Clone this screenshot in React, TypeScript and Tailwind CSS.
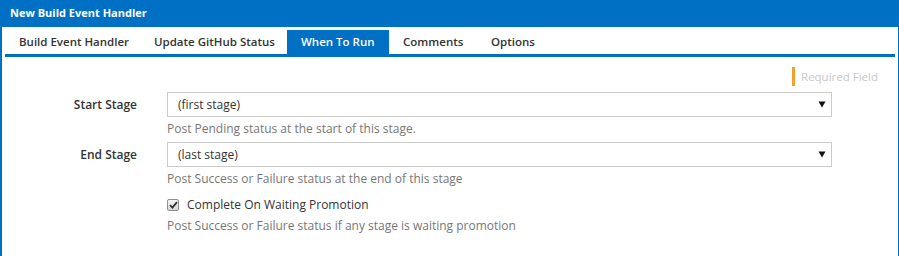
import React from "react";

const tabs = [
    { label: "Build Event Handler", w: "w-[135px]" },
    { label: "Update GitHub Status", w: "w-[147px]" },
    { label: "When To Run", w: "w-[102px]", active: true },
    { label: "Comments", w: "w-[88px]" },
    { label: "Options", w: "w-[86px]" },
];

function Caret() {
    return (
        <svg width="8" height="7" viewBox="0 0 8 7" className="shrink-0">
            <polygon points="0.5,0.5 7.5,0.5 4,6.5" fill="#111" />
        </svg>
    );
}

function StageSelect({ value }: { value: string }) {
    return (
        <div className="flex h-[25px] w-[665px] items-center justify-between border border-[#cccccc] bg-white pl-[10px] pr-[5px] text-[#333]">
            <span>{value}</span>
            <Caret />
        </div>
    );
}

export default function App() {
    return (
        <div
            className="flex h-[256px] w-[899px] flex-col border-l-2 border-r border-[#0070c4] bg-white text-[12px] text-[#333]"
            style={{ fontFamily: '"Open Sans", "Noto Sans", sans-serif' }}
        >
            <div className="flex h-[27px] shrink-0 items-center bg-[#0070c4] pl-[8px] text-[11px] font-bold text-white">
                New Build Event Handler
            </div>

            <div className="px-[3px]">
                <div className="mt-[3px] flex h-[24px] items-stretch text-[11.5px]">
                    {tabs.map((t) => (
                        <div
                            key={t.label}
                            className={`${t.w} flex items-center pl-[14px] font-semibold ${
                                t.active ? "bg-[#0070c4] text-white" : "text-[#333]"
                            }`}
                        >
                            {t.label}
                        </div>
                    ))}
                </div>
                <div className="h-[3px] bg-[#0070c4]" />

                <div className="mt-[10px] flex h-[19px] items-center justify-end pr-[17px]">
                    <div className="mr-[6px] h-[19px] w-[3px] bg-[#f5a02a]" />
                    <span className="text-[11.5px] text-[#c8c8c8]">Required Field</span>
                </div>

                <div className="mt-[6px] flex flex-col">
                    <div className="flex items-center">
                        <div className="w-[132px] text-right font-semibold">Start Stage</div>
                        <div className="ml-[30px]">
                            <StageSelect value="(first stage)" />
                        </div>
                    </div>
                    <div className="ml-[162px] flex h-[25px] items-start pt-[3px] text-[#777]">
                        Post Pending status at the start of this stage.
                    </div>

                    <div className="flex items-center">
                        <div className="w-[132px] text-right font-semibold">End Stage</div>
                        <div className="ml-[30px]">
                            <StageSelect value="(last stage)" />
                        </div>
                    </div>
                    <div className="ml-[162px] flex h-[25px] items-start pt-[3px] text-[#777]">
                        Post Success or Failure status at the end of this stage
                    </div>

                    <div className="ml-[162px] mt-[4px] flex h-[18px] items-center">
                        <div className="flex h-[12px] w-[12px] items-center justify-center rounded-[2px] border border-[#8e8e8e] bg-gradient-to-b from-[#f4f4f4] to-[#d8d8d8]">
                            <svg width="9" height="8" viewBox="0 0 9 8">
                                <path d="M1 4.2 L3.4 6.6 L8 1.2" stroke="#333" strokeWidth="1.8" fill="none" />
                            </svg>
                        </div>
                        <span className="ml-[8px]">Complete On Waiting Promotion</span>
                    </div>
                    <div className="ml-[162px] mt-[3px] text-[#777]">
                        Post Success or Failure status if any stage is waiting promotion
                    </div>
                </div>
            </div>
        </div>
    );
}
